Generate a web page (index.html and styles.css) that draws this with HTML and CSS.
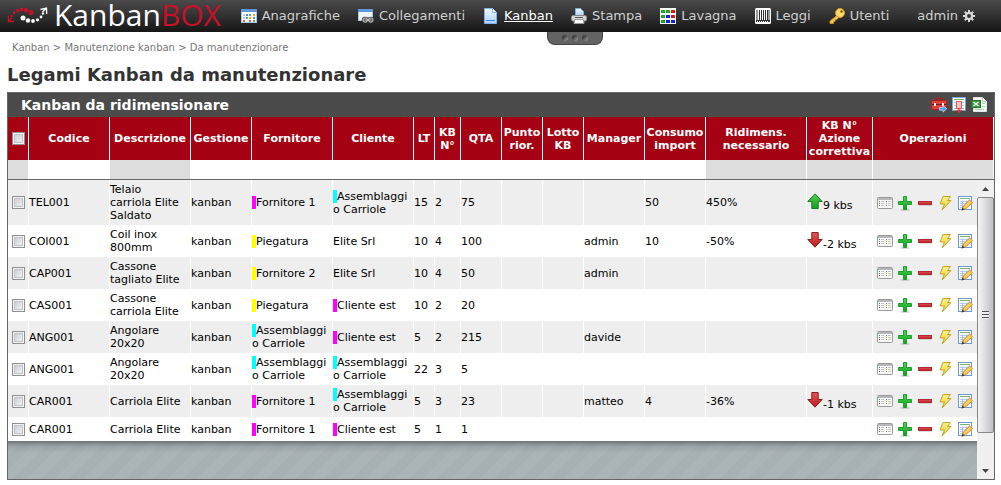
FILE: index.html
```html
<!DOCTYPE html>
<html lang="it">
<head>
<meta charset="utf-8">
<title>KanbanBOX - Legami Kanban da manutenzionare</title>
<link rel="stylesheet" href="styles.css">
</head>
<body>
<svg class="sprite" aria-hidden="true">
  <defs>
    <linearGradient id="g-green" x1="0" y1="0" x2="0" y2="1"><stop offset="0" stop-color="#4fd04f"/><stop offset="1" stop-color="#12a01f"/></linearGradient>
    <linearGradient id="g-red" x1="0" y1="0" x2="0" y2="1"><stop offset="0" stop-color="#e05858"/><stop offset="1" stop-color="#b81c22"/></linearGradient>
    <linearGradient id="g-yellow" x1="0" y1="0" x2="0" y2="1"><stop offset="0" stop-color="#fbf08a"/><stop offset="1" stop-color="#e6cf2c"/></linearGradient>
    <linearGradient id="g-page" x1="0" y1="0" x2="0" y2="1"><stop offset="0" stop-color="#f4faff"/><stop offset="1" stop-color="#a9d0f5"/></linearGradient>
  </defs>
  <symbol id="i-list" viewBox="0 0 16 16">
    <rect x=".5" y="2.500" width="15" height="11" rx="1" fill="#fafafa" stroke="#999"/>
    <path d="M1 3h14v2H1z" fill="#b8b8b8"/>
    <path d="M4 6.500h3M4 8.500h3M4 10.500h3M11 6.500h3M11 8.500h3M11 10.500h3" stroke="#c4c4c4"/>
    <path d="M2 6h1v1H2zM2 8h1v1H2zM9 10h1v1H9z" fill="#3a9b4a"/><path d="M2 10h1v1H2z" fill="#d04040"/>
    <path d="M9 6h1v1H9z" fill="#3b7ee0"/><path d="M9 8h1v1H9z" fill="#f0a020"/>
  </symbol>
  <symbol id="i-plus" viewBox="0 0 16 16">
    <ellipse cx="8" cy="15" rx="5" ry="1" fill="#000" opacity=".15"/>
    <path d="M6.500 1.500h3v5h5v3h-5v5h-3v-5h-5v-3h5z" fill="url(#g-green)" stroke="#1c9d2c"/>
  </symbol>
  <symbol id="i-minus" viewBox="0 0 16 16">
    <path d="M2 10h13v1H2z" fill="#000" opacity=".12"/>
    <rect x="1.500" y="6.500" width="13" height="3" fill="url(#g-red)" stroke="#b32a30"/>
  </symbol>
  <symbol id="i-bolt" viewBox="0 0 16 16">
    <path d="M6 1.500h7.500L10.500 5.500h3.500L5 15l2.500-6H3z" fill="url(#g-yellow)" stroke="#c0a52a"/>
  </symbol>
  <symbol id="i-edit" viewBox="0 0 16 16">
    <rect x="1.500" y="1.500" width="13" height="13" fill="#fff" stroke="#6d9ad6"/>
    <path d="M3 3.500h10" stroke="#72b872"/>
    <path d="M3 6.500h10M3 8.500h10M3 10.500h7M3 12.500h4" stroke="#b4cdf4"/>
    <path d="M5.500 5.500v8M9.500 5.500v6" stroke="#9fbff0"/>
    <path d="M5 15l1.500-4 6-6 3 2.500-6.500 6z" fill="#f9cf55" stroke="#d18b2a"/>
    <path d="M4.500 15.500l1-3 2 2z" fill="#333"/><path d="M12.500 5l3 2.500" stroke="#f0a070"/>
  </symbol>
  <symbol id="i-up" viewBox="0 0 16 16">
    <path d="M8 .8l7.200 7.700h-4V15.500H4.800V8.500h-4z" fill="url(#g-green)" stroke="#187a24"/>
  </symbol>
  <symbol id="i-down" viewBox="0 0 16 16">
    <path d="M8 15.200L.8 7.500h4V.5h6.400v7h4z" fill="url(#g-red)" stroke="#8f1a20"/>
  </symbol>
</svg>

<header class="topbar">
  <a class="logo" href="#" aria-label="KanbanBOX">
    <svg class="logo-mark" viewBox="0 0 42 18" aria-hidden="true">
      <g fill="#c8102a"><circle cx="24" cy="6.500" r="2.500"/><circle cx="19" cy="4.200" r="2.200"/><circle cx="14.500" cy="3.500" r="1.900"/><circle cx="10.500" cy="4.700" r="1.600"/><circle cx="7" cy="7" r="1.400"/><circle cx="4.500" cy="10" r="1.200"/></g>
      <path d="M1.500 9.500v6h5.500M2 15l3-3" fill="none" stroke="#c8102a" stroke-width="1.300"/>
      <g fill="#fff"><circle cx="16" cy="12" r="2.500"/><circle cx="21" cy="14.500" r="2.200"/><circle cx="26" cy="15" r="1.900"/><circle cx="30.500" cy="13.800" r="1.600"/><circle cx="34" cy="11" r="1.400"/><circle cx="36" cy="7.500" r="1.200"/></g>
      <path d="M33.500 3.500l6-1.500.2 6M39 2.500l-3.500 3.500" fill="none" stroke="#fff" stroke-width="1.300"/>
    </svg>
    <span class="logo-text">Kanban<span class="logo-box">BOX</span></span>
  </a>
  <nav class="menu">
    <a href="#"><svg viewBox="0 0 16 16"><rect x=".5" y="1.500" width="15" height="13" fill="#fff" stroke="#a9c6ea"/><path d="M0 1h16v3H0z" fill="#5f97dc"/><path d="M2 6h2v2H2zM2 9h2v2H2z" fill="#a9d0f7"/><path d="M5 6h2v2H5zM12 9h2v2h-2z" fill="#4c8be0"/><path d="M8 6h2v2H8zM5 9h2v2H5zM12 12h2v2h-2z" fill="#55b860"/><path d="M12 6h2v2h-2zM8 9h2v2H8z" fill="#f2a33a"/><path d="M2 12h2v2H2zM8 12h2v2H8z" fill="#e06060"/></svg>Anagrafiche</a>
    <a href="#"><svg viewBox="0 0 16 16"><rect x=".5" y="1.500" width="14" height="11" fill="#eef5fd" stroke="#a9c6ea"/><path d="M0 1h15v3H0z" fill="#5f97dc"/><g fill="#999" stroke="#444" stroke-width="2.500"><rect x="5" y="10" width="4.500" height="4" rx="2"/><rect x="10.500" y="10" width="4.500" height="4" rx="2"/></g><g fill="none" stroke="#ccc"><rect x="5" y="10" width="4.500" height="4" rx="2"/><rect x="10.500" y="10" width="4.500" height="4" rx="2"/></g><path d="M8 12h4" stroke="#ccc"/></svg>Collegamenti</a>
    <a class="current" href="#"><svg viewBox="0 0 16 16"><path d="M1.500.5h8l4 4v11h-12z" fill="url(#g-page)" stroke="#7fb2ee"/><path d="M9.500.5v4h4" fill="#fff" stroke="#7fb2ee"/><path d="M3 12.500h9" stroke="#3f8fe8"/></svg><span>Kanban</span></a>
    <a href="#"><svg viewBox="0 0 16 16"><path d="M4.500.5h5l3 3v5h-8z" fill="url(#g-page)" stroke="#79aeea"/><rect x=".5" y="7.500" width="15" height="5.500" rx="1.500" fill="#d6d6d6" stroke="#888"/><path d="M4 9.500h8" stroke="#555"/><path d="M3.500 11.500h9l.5 4H3z" fill="#fff" stroke="#999"/></svg>Stampa</a>
    <a href="#"><svg viewBox="0 0 16 16"><path d="M0 0h16v16H0z" fill="#fff"/><path d="M1 3.500h4M6 3.500h4M1 8.500h4M1 13.500h4" stroke="#1fa32c" stroke-width="3"/><path d="M11 3.500h4M11 8.500h4" stroke="#e0141c" stroke-width="3"/><path d="M6 8.500h4M6 13.500h4M11 13.500h4" stroke="#1420d8" stroke-width="3"/></svg>Lavagna</a>
    <a href="#"><svg viewBox="0 0 16 16"><rect x="0" y="0" width="16" height="16" rx="1.500" fill="#fff"/><path d="M1 2h14v12H1z" fill="#333"/><path d="M3.500 2v10M5.500 2v10M7.500 2v10M9.500 2v10M11.500 2v10" stroke="#fff"/><path d="M2 2v10M14 2v10" stroke="#fff"/><path d="M2 13.500h12" stroke="#fff" stroke-dasharray="1 1"/></svg>Leggi</a>
    <a href="#"><svg viewBox="0 0 16 16"><path d="M8 7.500L1 13v2.500h3.500v-2H6v-2h2L9.500 9.500z" fill="#f8d050" stroke="#c8882a"/><circle cx="11" cy="5" r="4.500" fill="#fbdc68" stroke="#d8952c"/><circle cx="12.500" cy="3.500" r="1.200" fill="#7a5010"/></svg>Utenti</a>
    <a class="user" href="#">admin<svg class="gear" viewBox="0 0 12 12"><circle cx="6" cy="6" r="3" fill="none" stroke="#ddd" stroke-width="2"/><path d="M6 0v2.500M6 9.500V12M0 6h2.500M9.500 6H12M1.800 1.800l1.800 1.800M8.400 8.400l1.800 1.800M1.800 10.200l1.800-1.800M8.400 3.600l1.800-1.800" stroke="#ddd" stroke-width="2"/></svg></a>
  </nav>
  <button class="handle" type="button" aria-label="Mostra menu"><i></i><i></i><i></i></button>
</header>

<main>
  <div class="crumbs">Kanban &gt; Manutenzione kanban &gt; Da manutenzionare</div>
  <h1>Legami Kanban da manutenzionare</h1>

  <section class="panel">
    <div class="panel-head">
      <h2>Kanban da ridimensionare</h2>
      <div class="tools">
        <button type="button" aria-label="Strumenti"><svg viewBox="0 0 16 16"><path d="M5 4V1.500h6V4" fill="none" stroke="#b01c1c" stroke-width="1.500"/><rect x=".5" y="3.500" width="15" height="9" rx="1" fill="#e0403a" stroke="#a82020"/><path d="M1 7.500h14" stroke="#7c1010"/><path d="M3 6h2v3H3zM11 6h2v3h-2z" fill="#eee"/><path d="M8.500 10.500H12v-2l3.800 3.300-3.800 3.400v-2H8.500z" fill="#4c9cf0" stroke="#d8ecff" stroke-width=".6"/></svg></button>
        <button type="button" aria-label="Filtra colonne"><svg viewBox="0 0 16 16"><rect x="1.500" y=".5" width="13" height="13" fill="#fff" stroke="#7ba3dc"/><path d="M3 2.500h10" stroke="#70b870"/><path d="M3 5.500h10M3 8.500h10M3 11.500h10" stroke="#a9c4ec"/><rect x="5.500" y="4.500" width="5" height="7" fill="#f9c4c4" stroke="#e06060"/><path d="M8 11v4M5.800 13L8 15.300l2.200-2.300" fill="none" stroke="#e03030" stroke-width="1.300"/></svg></button>
        <button type="button" aria-label="Esporta in Excel"><svg viewBox="0 0 16 16"><path d="M2.500.5h9l4 4v10h-13z" fill="#f6faf6" stroke="#dfe8df"/><path d="M11.500.5v4h4" fill="#fff" stroke="#b8c4b8"/><rect x=".5" y="3.500" width="9" height="7" fill="#3a9a40" stroke="#24772b"/><path d="M2.500 5l5 4M7.500 5l-5 4" stroke="#fff" stroke-width="1.300"/><path d="M11 6.500h3M11 9.500h3M4 12.500h9" stroke="#a8cfaa"/></svg></button>
      </div>
    </div>

    <table class="grid grid-head">
      <colgroup><col class="w21"><col class="w81"><col class="w81"><col class="w61"><col class="w81"><col class="w81"><col class="w21"><col class="w26"><col class="w41"><col class="w41"><col class="w41"><col class="w61"><col class="w61"><col class="w101"><col class="w66"><col></colgroup>
      <thead>
        <tr><th><input type="checkbox" aria-label="Seleziona tutti"></th><th>Codice</th><th>Descrizione</th><th>Gestione</th><th>Fornitore</th><th>Cliente</th><th>LT</th><th>KB N°</th><th>QTA</th><th>Punto rior.</th><th>Lotto KB</th><th>Manager</th><th>Consumo import</th><th>Ridimens. necessario</th><th>KB N° Azione correttiva</th><th>Operazioni</th></tr>
        <tr class="filters"><td class="off"></td><td></td><td class="off"></td><td></td><td></td><td></td><td></td><td></td><td></td><td></td><td></td><td></td><td></td><td class="off"></td><td class="off"></td><td class="off"></td></tr>
      </thead>
    </table>

    <div class="viewport">
      <div class="rows">
        <table class="grid grid-body">
          <colgroup><col class="w21"><col class="w81"><col class="w81"><col class="w61"><col class="w81"><col class="w81"><col class="w21"><col class="w26"><col class="w41"><col class="w41"><col class="w41"><col class="w61"><col class="w61"><col class="w101"><col class="w66"><col></colgroup>
          <tbody>
            <tr><td><input type="checkbox" aria-label="Seleziona TEL001"></td><td>TEL001</td><td>Telaio carriola Elite Saldato</td><td>kanban</td><td><span class="tag magenta">Fornitore 1</span></td><td><span class="tag cyan">Assemblaggio Carriole</span></td><td>15</td><td>2</td><td>75</td><td></td><td></td><td></td><td>50</td><td>450%</td><td><svg><use href="#i-up"/></svg>9 kbs</td>
              <td class="ops"><div><button type="button" aria-label="Dettagli"><svg><use href="#i-list"/></svg></button><button type="button" aria-label="Aggiungi"><svg><use href="#i-plus"/></svg></button><button type="button" aria-label="Rimuovi"><svg><use href="#i-minus"/></svg></button><button type="button" aria-label="Esegui"><svg><use href="#i-bolt"/></svg></button><button type="button" aria-label="Modifica"><svg><use href="#i-edit"/></svg></button></div></td></tr>
            <tr><td><input type="checkbox" aria-label="Seleziona COI001"></td><td>COI001</td><td>Coil inox 800mm</td><td>kanban</td><td><span class="tag yellow">Piegatura</span></td><td>Elite Srl</td><td>10</td><td>4</td><td>100</td><td></td><td></td><td>admin</td><td>10</td><td>-50%</td><td><svg><use href="#i-down"/></svg>-2 kbs</td>
              <td class="ops"><div><button type="button" aria-label="Dettagli"><svg><use href="#i-list"/></svg></button><button type="button" aria-label="Aggiungi"><svg><use href="#i-plus"/></svg></button><button type="button" aria-label="Rimuovi"><svg><use href="#i-minus"/></svg></button><button type="button" aria-label="Esegui"><svg><use href="#i-bolt"/></svg></button><button type="button" aria-label="Modifica"><svg><use href="#i-edit"/></svg></button></div></td></tr>
            <tr><td><input type="checkbox" aria-label="Seleziona CAP001"></td><td>CAP001</td><td>Cassone tagliato Elite</td><td>kanban</td><td><span class="tag yellow">Fornitore 2</span></td><td>Elite Srl</td><td>10</td><td>4</td><td>50</td><td></td><td></td><td>admin</td><td></td><td></td><td></td>
              <td class="ops"><div><button type="button" aria-label="Dettagli"><svg><use href="#i-list"/></svg></button><button type="button" aria-label="Aggiungi"><svg><use href="#i-plus"/></svg></button><button type="button" aria-label="Rimuovi"><svg><use href="#i-minus"/></svg></button><button type="button" aria-label="Esegui"><svg><use href="#i-bolt"/></svg></button><button type="button" aria-label="Modifica"><svg><use href="#i-edit"/></svg></button></div></td></tr>
            <tr><td><input type="checkbox" aria-label="Seleziona CAS001"></td><td>CAS001</td><td>Cassone carriola Elite</td><td>kanban</td><td><span class="tag yellow">Piegatura</span></td><td><span class="tag magenta">Cliente est</span></td><td>10</td><td>2</td><td>20</td><td></td><td></td><td></td><td></td><td></td><td></td>
              <td class="ops"><div><button type="button" aria-label="Dettagli"><svg><use href="#i-list"/></svg></button><button type="button" aria-label="Aggiungi"><svg><use href="#i-plus"/></svg></button><button type="button" aria-label="Rimuovi"><svg><use href="#i-minus"/></svg></button><button type="button" aria-label="Esegui"><svg><use href="#i-bolt"/></svg></button><button type="button" aria-label="Modifica"><svg><use href="#i-edit"/></svg></button></div></td></tr>
            <tr><td><input type="checkbox" aria-label="Seleziona ANG001"></td><td>ANG001</td><td>Angolare 20x20</td><td>kanban</td><td><span class="tag cyan">Assemblaggio Carriole</span></td><td><span class="tag magenta">Cliente est</span></td><td>5</td><td>2</td><td>215</td><td></td><td></td><td>davide</td><td></td><td></td><td></td>
              <td class="ops"><div><button type="button" aria-label="Dettagli"><svg><use href="#i-list"/></svg></button><button type="button" aria-label="Aggiungi"><svg><use href="#i-plus"/></svg></button><button type="button" aria-label="Rimuovi"><svg><use href="#i-minus"/></svg></button><button type="button" aria-label="Esegui"><svg><use href="#i-bolt"/></svg></button><button type="button" aria-label="Modifica"><svg><use href="#i-edit"/></svg></button></div></td></tr>
            <tr><td><input type="checkbox" aria-label="Seleziona ANG001"></td><td>ANG001</td><td>Angolare 20x20</td><td>kanban</td><td><span class="tag cyan">Assemblaggio Carriole</span></td><td><span class="tag cyan">Assemblaggio Carriole</span></td><td>22</td><td>3</td><td>5</td><td></td><td></td><td></td><td></td><td></td><td></td>
              <td class="ops"><div><button type="button" aria-label="Dettagli"><svg><use href="#i-list"/></svg></button><button type="button" aria-label="Aggiungi"><svg><use href="#i-plus"/></svg></button><button type="button" aria-label="Rimuovi"><svg><use href="#i-minus"/></svg></button><button type="button" aria-label="Esegui"><svg><use href="#i-bolt"/></svg></button><button type="button" aria-label="Modifica"><svg><use href="#i-edit"/></svg></button></div></td></tr>
            <tr><td><input type="checkbox" aria-label="Seleziona CAR001"></td><td>CAR001</td><td>Carriola Elite</td><td>kanban</td><td><span class="tag magenta">Fornitore 1</span></td><td><span class="tag cyan">Assemblaggio Carriole</span></td><td>5</td><td>3</td><td>23</td><td></td><td></td><td>matteo</td><td>4</td><td>-36%</td><td><svg><use href="#i-down"/></svg>-1 kbs</td>
              <td class="ops"><div><button type="button" aria-label="Dettagli"><svg><use href="#i-list"/></svg></button><button type="button" aria-label="Aggiungi"><svg><use href="#i-plus"/></svg></button><button type="button" aria-label="Rimuovi"><svg><use href="#i-minus"/></svg></button><button type="button" aria-label="Esegui"><svg><use href="#i-bolt"/></svg></button><button type="button" aria-label="Modifica"><svg><use href="#i-edit"/></svg></button></div></td></tr>
            <tr><td><input type="checkbox" aria-label="Seleziona CAR001"></td><td>CAR001</td><td>Carriola Elite</td><td>kanban</td><td><span class="tag magenta">Fornitore 1</span></td><td><span class="tag magenta">Cliente est</span></td><td>5</td><td>1</td><td>1</td><td></td><td></td><td></td><td></td><td></td><td></td>
              <td class="ops"><div><button type="button" aria-label="Dettagli"><svg><use href="#i-list"/></svg></button><button type="button" aria-label="Aggiungi"><svg><use href="#i-plus"/></svg></button><button type="button" aria-label="Rimuovi"><svg><use href="#i-minus"/></svg></button><button type="button" aria-label="Esegui"><svg><use href="#i-bolt"/></svg></button><button type="button" aria-label="Modifica"><svg><use href="#i-edit"/></svg></button></div></td></tr>
          </tbody>
        </table>
        <div class="backdrop"></div>
      </div>
      <div class="scrollbar" aria-hidden="true">
        <svg viewBox="0 0 17 17"><path d="M5 11l3.500-4 3.500 4z" fill="#444"/></svg>
        <div class="thumb"><i></i></div>
        <div class="track"></div>
        <svg viewBox="0 0 17 17"><path d="M5 7l3.500 4L12 7z" fill="#444"/></svg>
      </div>
    </div>
  </section>
</main>
</body>
</html>
```
FILE: styles.css
```css
* { box-sizing: border-box; }

body {
  margin: 0;
  background: #fff;
  color: #000;
  font-family: Verdana, "DejaVu Sans", sans-serif;
  font-size: 11px;
  line-height: 13px;
}

button {
  display: block;
  margin: 0;
  padding: 0;
  border: 0;
  background: none;
}

svg { display: block; width: 16px; height: 16px; }
.sprite { position: absolute; width: 0; height: 0; }

/* top bar */
.topbar {
  position: relative;
  display: flex;
  align-items: center;
  height: 32px;
  padding: 0 26px 0 7px;
  background: linear-gradient(#4b4b4b, #161616);
}

.logo {
  display: flex;
  align-items: center;
  gap: 5px;
  padding-bottom: 2px;
  color: #fff;
  text-decoration: none;
}
.logo-mark { width: 42px; height: 18px; }
.logo-text {
  font: 30px/30px "Open Sans", "Noto Sans", sans-serif;
}
.logo-box { color: #c8102a; }

.menu {
  display: flex;
  flex: 1;
  justify-content: flex-end;
  gap: 18px;
}
.menu a {
  display: flex;
  align-items: center;
  gap: 5px;
  color: #d0d0d0;
  font-size: 13px;
  line-height: 16px;
  text-decoration: none;
}
.menu .current { color: #fff; }
.menu .current span { text-decoration: underline; }
.menu .user { margin-left: 10px; }
.menu .gear { width: 12px; height: 12px; }

.handle {
  position: absolute;
  top: 100%;
  left: 547px;
  display: flex;
  justify-content: center;
  align-items: center;
  gap: 4px;
  width: 56px;
  height: 13px;
  border: 1px solid #444;
  border-top: 0;
  border-radius: 0 0 8px 8px;
  background: #636363;
}
.handle i {
  width: 6px;
  height: 6px;
  border-radius: 50%;
  background: linear-gradient(135deg, #3c3c3c 30%, #a8a8a8);
}

/* page heading */
main { padding: 8px 6px 0 7px; }
.crumbs {
  padding: 0 5px;
  color: #777;
  font-size: 10px;
  line-height: 15px;
}
h1 {
  margin: 8px 0 6px;
  color: #333;
  font-size: 18px;
  line-height: 23px;
}

/* panel */
.panel { border: 1px solid #666; }
.panel-head {
  display: flex;
  align-items: center;
  justify-content: space-between;
  height: 24px;
  padding: 0 7px 0 13px;
  background: #4b4b4b;
}
h2 {
  margin: 0;
  color: #fff;
  font-size: 14px;
  line-height: 24px;
}
.tools { display: flex; gap: 4px; }

/* grids */
.grid {
  width: 100%;
  table-layout: fixed;
  border-collapse: separate;
  border-spacing: 0;
}
.w21 { width: 21px; }
.w26 { width: 26px; }
.w41 { width: 41px; }
.w61 { width: 61px; }
.w66 { width: 66px; }
.w81 { width: 81px; }
.w101 { width: 101px; }

.grid th,
.grid td { border-right: 1px solid #fff; }
.grid td:first-child,
.grid th:first-child { padding: 0 0 0 4px; }

.grid th {
  height: 43px;
  padding: 0;
  background: #a50314;
  color: #fff;
  text-align: center;
}
.filters td { height: 19px; padding: 0; }
.filters .off { background: #ddd; }

.grid input {
  appearance: none;
  display: block;
  width: 13px;
  height: 13px;
  margin: 0;
  border: 1px solid #8e8f8f;
  background: linear-gradient(135deg, #c4c9d0, #f6f6f6);
  box-shadow: inset 0 0 0 1px #f4f4f4, inset 0 0 0 2px #c0c4ca;
}

.viewport {
  display: flex;
  height: 300px;
  border-top: 1px solid #666;
}
.rows {
  display: flex;
  flex: 1;
  flex-direction: column;
  min-width: 0;
}
.grid-body td {
  height: 24px;
  padding: 3px 5px 3px 0;
  overflow-wrap: anywhere;
  vertical-align: middle;
}
.grid-body tr:nth-child(odd) td { background: #eee; }
.grid-body td:last-child { border-right: 0; }
.grid-body td > svg { display: inline-block; vertical-align: baseline; }
.grid-body .ops { padding: 0 0 0 4px; }
.ops div { display: flex; gap: 4px; }

.tag { border-left: 4px solid; }
.tag.magenta { border-color: #f0f; }
.tag.cyan { border-color: #0ff; }
.tag.yellow { border-color: #ff0; }

.backdrop {
  flex: 1;
  background:
    linear-gradient(rgba(60, 65, 68, .55), rgba(60, 65, 68, .15) 5px, rgba(60, 65, 68, 0) 12px),
    repeating-linear-gradient(135deg, #abb4b7 0 10px, #a7b0b3 10px 20px);
}

/* scroll bar */
.scrollbar {
  display: flex;
  flex-direction: column;
  width: 17px;
  background: #f0f0f0;
}
.scrollbar svg { width: 17px; height: 17px; }
.thumb {
  display: flex;
  flex: 8;
  align-items: center;
  justify-content: center;
  border: 1px solid #888;
  border-radius: 2px;
  background: linear-gradient(90deg, #f5f5f5, #dcdce0 50%, #bfc0c4);
}
.thumb i {
  width: 7px;
  height: 8px;
  background: repeating-linear-gradient(#555 0 1px, #eee 1px 3px);
}
.track { flex: 1; }
```
